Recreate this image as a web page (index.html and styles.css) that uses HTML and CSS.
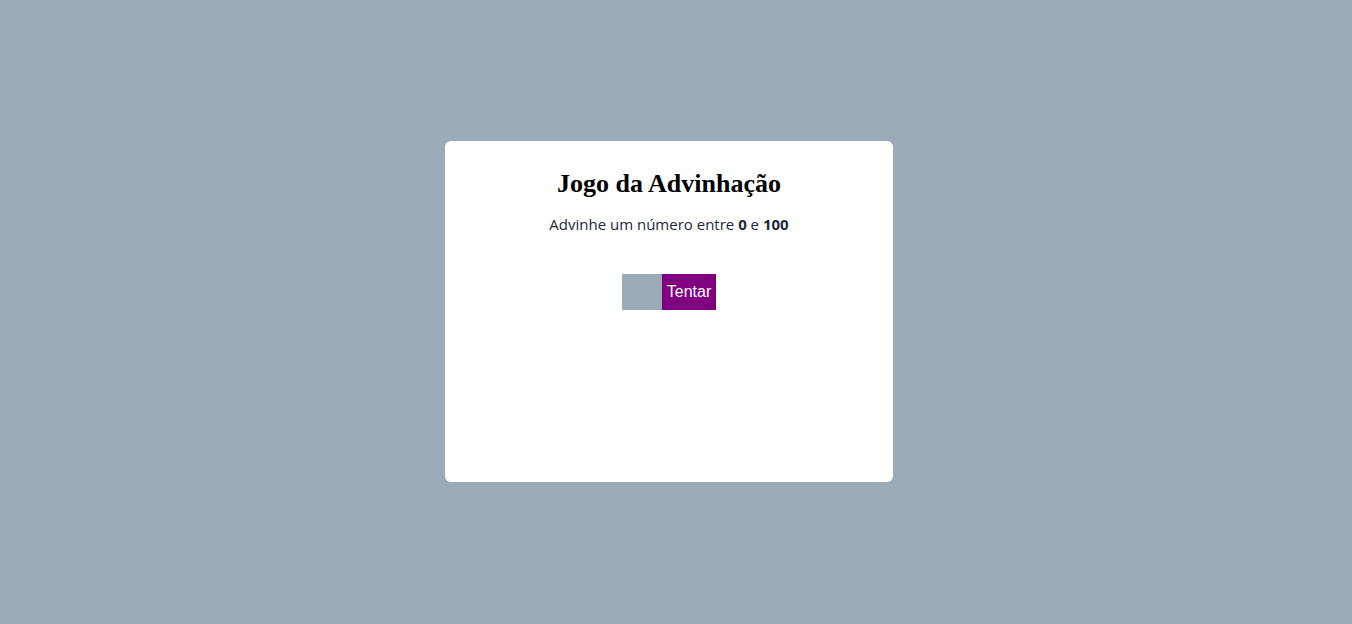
FILE: index.html
```html
<!DOCTYPE html>
<html lang="pt">
<head>
<meta charset="utf-8">
<title>Jogo da Advinhação</title>
<link rel="stylesheet" href="styles.css">
</head>
<body>
<main class="page">
  <section class="card">
    <h2 class="title">Jogo da Advinhação</h2>
    <p class="subtitle">Advinhe um número entre <strong>0</strong> e <strong>100</strong></p>
    <form class="guess">
      <input class="guess-input" type="text">
      <button class="guess-btn" type="button">Tentar</button>
    </form>
  </section>
</main>
</body>
</html>
```
FILE: styles.css
```css
html, body {
  margin: 0;
  padding: 0;
  height: 100%;
}
body {
  background: #9babb8;
}
.page {
  height: 100%;
  display: flex;
  align-items: center;
  justify-content: center;
}
.card {
  width: 448px;
  height: 341px;
  box-sizing: border-box;
  background: #fff;
  border-radius: 6px;
  padding: 27px 24px;
  display: flex;
  flex-direction: column;
  align-items: center;
  margin: -2px 14px 0 0;
}
.title {
  font-family: "Liberation Serif", serif;
  font-size: 26px;
  font-weight: bold;
  color: #000;
  margin: 0;
  line-height: 32px;
}
.subtitle {
  font-family: "Open Sans", sans-serif;
  font-size: 15px;
  color: #1e293b;
  margin: 13px 0 0;
  line-height: 22px;
}
.subtitle strong {
  font-weight: 700;
}
.guess {
  display: flex;
  margin-top: 39px;
}
.guess-input {
  width: 40px;
  height: 36px;
  box-sizing: border-box;
  border: none;
  background: #9babb8;
  padding: 0;
  outline: none;
}
.guess-btn {
  width: 54px;
  height: 36px;
  border: none;
  background: #800080;
  color: #fff;
  font-family: "Liberation Sans", Arial, sans-serif;
  font-size: 16px;
  padding: 0;
}
```
